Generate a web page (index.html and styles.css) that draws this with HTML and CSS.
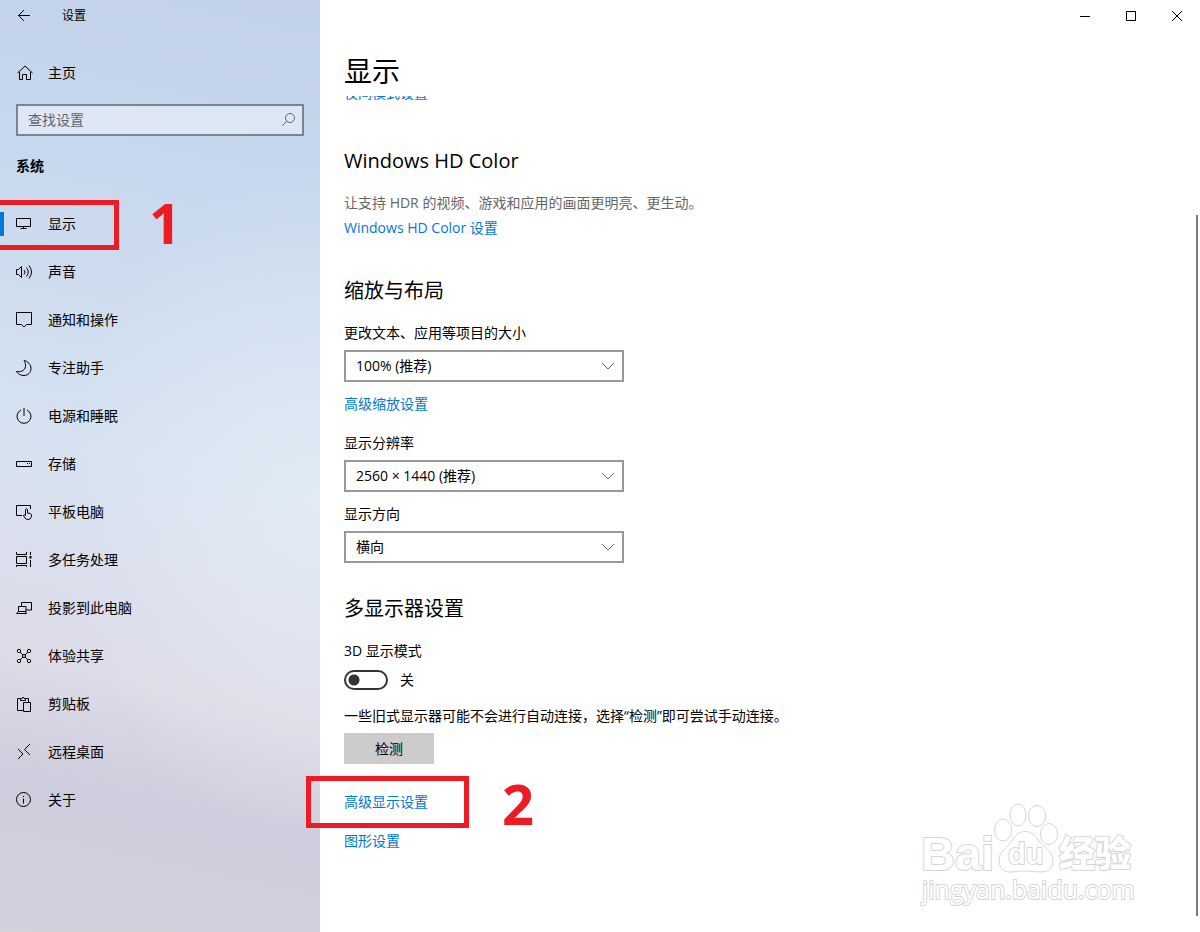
FILE: index.html
```
<!DOCTYPE html>
<html lang="zh-CN">
<head>
  <meta charset="UTF-8">
  <meta name="viewport" content="width=device-width, initial-scale=1.0">
  <title>设置</title>
  <link rel="stylesheet" href="styles.css">
</head>
<body>
  <aside class="sidebar">
    <header class="app-bar">
      <button class="back" type="button" aria-label="返回">
        <svg class="icon" viewBox="0 0 16 16"><path d="M14 7.500H2.500M8 2L2.500 7.500L8 13"/></svg>
      </button>
      <span>设置</span>
    </header>

    <a class="home" href="#home">
      <svg class="icon" viewBox="0 0 16 16"><path d="M1.500 8L9 1L16.500 8M3.500 7v7.500h3V9.500h4v5h4V7"/></svg>
      主页
    </a>

    <div class="search">
      <input type="search" aria-label="查找设置" placeholder="查找设置">
      <svg class="icon" viewBox="0 0 16 16"><circle cx="10" cy="6" r="4.500"/><path d="M6.800 9.200L2 14"/></svg>
    </div>

    <h2 class="group">系统</h2>

    <nav>
      <ul class="menu">
        <li class="marked">
          <a class="active" href="#display" aria-current="page">
            <svg class="icon" viewBox="0 0 16 16"><path d="M.5 2.500h14v8H.5zM7.500 10.500v2M4.500 12.500h6"/></svg>
            显示
          </a>
          <span class="mark mark-menu"></span>
          <span class="step step-one">1</span>
        </li>
        <li><a href="#sound">
          <svg class="icon" viewBox="0 0 16 16"><path d="M.5 5.500h2L5.500 2.500v11l-3-3h-2zM8 6q2 2 0 4.500M10.500 3.500q3.500 4.500 0 9M13 1.500q5 6.500 0 13"/></svg>
          声音</a></li>
        <li><a href="#notifications">
          <svg class="icon" viewBox="0 0 16 16"><path d="M.5.500h15v12h-5L8 15l-2.500-2.500h-5z"/></svg>
          通知和操作</a></li>
        <li><a href="#focus">
          <svg class="icon" viewBox="0 0 16 16"><path d="M8 .5C12 1.300 15 4.500 15 8.500C15 12.500 12 15.500 8 15.500C4.500 15.500 2 14 .5 11.500C6 12.500 10 9.500 9.500 5C9.400 3 8.800 1.800 8 .5z"/></svg>
          专注助手</a></li>
        <li><a href="#power">
          <svg class="icon" viewBox="0 0 16 16"><path d="M5 2a7 7 0 1 0 6 0M8 0v8"/></svg>
          电源和睡眠</a></li>
        <li><a href="#storage">
          <svg class="icon" viewBox="0 0 16 16"><path d="M.5 5.500h15v5H.5zM11 7.500h1M13 7.500h1"/></svg>
          存储</a></li>
        <li><a href="#tablet">
          <svg class="icon" viewBox="0 0 16 16"><path d="M6 11.500H.5v-10h14V5M9.500 11.500V5.500q1-1.500 2 0v3.500l3 .5q1.500 1 1 3q-.5 3-3.500 3q-2 0-3-1.500L7.300 11.500q.8-1.300 2.200 0"/></svg>
          平板电脑</a></li>
        <li><a href="#multitask">
          <svg class="icon" viewBox="0 0 16 16"><path d="M.5 0v2.500h10V0M.5 4.500h10v7H.5zM.5 15v-1.500h10V15M14.500 0v3M14.500 8v7"/><path d="M14.500 4v2.500" stroke-width="2"/></svg>
          多任务处理</a></li>
        <li><a href="#project">
          <svg class="icon" viewBox="0 0 16 16"><path d="M5.500 6V2.500h10v7.500H10M2.500 6.500h7.500v5H2.500zM2.500 11.500l-2 2h10l-1-2"/></svg>
          投影到此电脑</a></li>
        <li><a href="#shared">
          <svg class="icon" viewBox="0 0 16 16"><circle cx="3" cy="3" r="1.700"/><circle cx="13" cy="3" r="1.700"/><circle cx="3" cy="13" r="1.700"/><circle cx="13" cy="13" r="1.700"/><circle cx="8" cy="8" r="1.500"/><path d="M4.200 4.200L7 7M11.800 4.200L9 7M4.200 11.800L7 9M11.800 11.800L9 9"/></svg>
          体验共享</a></li>
        <li><a href="#clipboard">
          <svg class="icon" viewBox="0 0 16 16"><path d="M7 14.500H1.500v-12H4M10 2.500h2.500V6M4.500 4.500v-2h1.500q1-3 2 0H9.500v2zM7.500 6.500h7v9h-7z"/></svg>
          剪贴板</a></li>
        <li><a href="#remote">
          <svg class="icon" viewBox="0 0 16 16"><path d="M2 5l5 5L2 15M14 0L8.500 5.500L14 11"/></svg>
          远程桌面</a></li>
        <li><a href="#about">
          <svg class="icon" viewBox="0 0 16 16"><circle cx="7.500" cy="7.500" r="7"/><path d="M7.500 6.500v5M7.500 4v1"/></svg>
          关于</a></li>
      </ul>
    </nav>
  </aside>

  <main class="page">
    <div class="window-buttons">
      <button type="button" aria-label="最小化"><svg viewBox="0 0 10 10"><path d="M0 5.500h10"/></svg></button>
      <button type="button" aria-label="最大化"><svg viewBox="0 0 10 10"><path d="M.5.500h9v9h-9z"/></svg></button>
      <button type="button" aria-label="关闭"><svg viewBox="0 0 10 10"><path d="M0 0l10 10M10 0L0 10"/></svg></button>
    </div>

    <h1>显示</h1>

    <div class="content">
      <div class="scrolled">
        <a href="#night">夜间模式设置</a>
      </div>

      <section class="hd-color">
        <h2>Windows HD Color</h2>
        <p class="note">让支持 HDR 的视频、游戏和应用的画面更明亮、更生动。</p>
        <a href="#hd">Windows HD Color 设置</a>
      </section>

      <section class="scale">
        <h2>缩放与布局</h2>
        <label for="size">更改文本、应用等项目的大小</label>
        <div class="select">
          <select id="size"><option>100% (推荐)</option></select>
          <svg viewBox="0 0 12 8"><path d="M0 1l6 6l6-6"/></svg>
        </div>
        <a class="scale-link" href="#scaling">高级缩放设置</a>
        <label for="resolution">显示分辨率</label>
        <div class="select">
          <select id="resolution"><option>2560 × 1440 (推荐)</option></select>
          <svg viewBox="0 0 12 8"><path d="M0 1l6 6l6-6"/></svg>
        </div>
        <label for="orientation">显示方向</label>
        <div class="select">
          <select id="orientation"><option>横向</option></select>
          <svg viewBox="0 0 12 8"><path d="M0 1l6 6l6-6"/></svg>
        </div>
      </section>

      <section class="multi">
        <h2>多显示器设置</h2>
        <label for="mode">3D 显示模式</label>
        <div class="toggle">
          <input id="mode" type="checkbox" role="switch">
          <span>关</span>
        </div>
        <p>一些旧式显示器可能不会进行自动连接，选择“检测”即可尝试手动连接。</p>
        <button class="detect" type="button">检测</button>
        <div class="marked advanced">
          <a href="#advanced">高级显示设置</a>
          <span class="mark mark-link"></span>
          <span class="step step-two">2</span>
        </div>
        <a href="#graphics">图形设置</a>
      </section>
    </div>

    <div class="scrollbar"></div>

    <svg class="watermark" viewBox="0 0 220 112" role="img" aria-label="Baidu 经验">
      <text class="brand" x="1" y="70">Bai</text>
      <ellipse cx="83" cy="30" rx="8.500" ry="11"/>
      <ellipse cx="98" cy="15" rx="8" ry="11"/>
      <ellipse cx="117" cy="16" rx="8.700" ry="10.500"/>
      <ellipse cx="129" cy="34" rx="8.700" ry="10.500"/>
      <path d="M105 31.500C111 31.500 115 35 118 40C122 46 133 50 133 60C133 68 128 72 122 72C114 72 112 71 105 71C98 71 96 72 88 72C82 71 79 66 79 60C79 51 88 47 92 41C95 35 99 31.500 105 31.500z"/>
      <text class="du" x="88" y="64">du</text>
      <text class="cn" x="139" y="67">经验</text>
      <text class="url" x="2" y="99">jingyan.baidu.com</text>
    </svg>
  </main>
</body>
</html>
```
FILE: styles.css
```
:root {
  --link: #0078d7;
  --mark: #ed1c24;
  --border: #999;
}

* {
  margin: 0;
  padding: 0;
  box-sizing: border-box;
}

body {
  display: flex;
  min-height: 100vh;
  font-family: "Open Sans", "Noto Sans CJK SC", sans-serif;
  font-size: 14px;
  line-height: 20px;
  color: #000;
  background: #fff;
}

a {
  color: var(--link);
  text-decoration: none;
}

button,
input,
select {
  font: inherit;
  color: inherit;
}

svg {
  fill: none;
  stroke: currentColor;
}

ul {
  list-style: none;
}

.icon {
  width: 16px;
  height: 16px;
  flex: none;
  overflow: visible;
}

/* sidebar */
.sidebar {
  position: relative;
  flex: 0 0 320px;
  background:
    radial-gradient(ellipse 260px 340px at 100% 54%, rgba(233, 241, 248, 0.6), transparent),
    linear-gradient(192deg, #c2d1e9 0%, #c7d7ed 20%, #cfddef 36%, #d6e2f0 50%, #dadeec 61%, #dddbe7 72%, #cecddd 84%, #d4d0dc 100%);
}

.app-bar {
  display: flex;
  align-items: center;
  gap: 30px;
  height: 32px;
  padding-left: 16px;
  font-size: 12px;
}

.back {
  display: flex;
  border: 0;
  background: none;
}

.home {
  display: flex;
  align-items: center;
  gap: 16px;
  height: 48px;
  margin-top: 17px;
  padding-left: 16px;
  color: #000;
}

.search {
  display: flex;
  align-items: center;
  height: 32px;
  margin: 7px 16px 0;
  padding: 0 6px 0 10px;
  border: 2px solid #7a8490;
  background: rgba(255, 255, 255, 0.42);
  color: #60666e;
}

.search input {
  flex: 1;
  min-width: 0;
  border: 0;
  outline: 0;
  background: none;
}

.search input::placeholder {
  color: #60666e;
  opacity: 1;
}

.group {
  margin: 20px 16px 24px;
  font-size: 14px;
  font-weight: 700;
}

.menu a {
  display: flex;
  align-items: center;
  gap: 16px;
  height: 48px;
  padding-left: 16px;
  color: #000;
}

.menu .active {
  background: linear-gradient(var(--link), var(--link)) 0 12px / 4px 24px no-repeat;
}

/* red guide marks laid over the page */
.marked {
  position: relative;
}

.mark {
  position: absolute;
  border: 5px solid var(--mark);
  pointer-events: none;
}

.mark-menu {
  top: 0;
  left: 0;
  width: 119px;
  height: 50px;
  border-left: 0;
}

.mark-link {
  top: -16px;
  left: -38px;
  width: 163px;
  height: 52px;
}

.step {
  position: absolute;
  font-size: 56px;
  font-weight: 700;
  line-height: 56px;
  color: var(--mark);
}

.step-one {
  top: -6px;
  left: 149px;
}

.step-two {
  top: -17px;
  left: 158px;
}

/* page */
.page {
  position: relative;
  flex: 1;
  min-width: 0;
}

.window-buttons {
  display: flex;
  justify-content: flex-end;
  height: 32px;
}

.window-buttons button {
  display: grid;
  place-items: center;
  width: 46px;
  border: 0;
  background: none;
}

.window-buttons svg {
  width: 10px;
  height: 10px;
}

h1 {
  padding: 16px 24px 2px;
  font-size: 28px;
  font-weight: 400;
  line-height: 46px;
}

.content {
  padding: 0 24px;
}

.content a,
.content label {
  display: block;
  width: fit-content;
}

.content h2 {
  margin-bottom: 18px;
  font-size: 20px;
  font-weight: 400;
  line-height: 28px;
}

/* only the lower edge of this row is left below the title */
.scrolled {
  display: flex;
  align-items: flex-end;
  height: 7px;
  overflow: hidden;
}

.hd-color {
  margin-top: 44px;
}

.note {
  margin-bottom: 5px;
  color: #666;
}

.scale {
  margin-top: 39px;
}

.select {
  position: relative;
  width: 280px;
  margin: 7px 0 12px;
}

.select select {
  display: block;
  width: 100%;
  height: 32px;
  padding: 0 32px 0 10px;
  border: 2px solid var(--border);
  border-radius: 0;
  background: #fff;
  appearance: none;
}

.select svg {
  position: absolute;
  top: 12px;
  right: 10px;
  width: 12px;
  height: 8px;
  color: #666;
  pointer-events: none;
}

.scale-link {
  margin-bottom: 19px;
}

.multi {
  margin-top: 32px;
}

.toggle {
  display: flex;
  align-items: center;
  gap: 12px;
  margin: 9px 0 16px;
}

.toggle input {
  width: 44px;
  height: 20px;
  border: 2px solid #333;
  border-radius: 10px;
  background: radial-gradient(circle at 8px 8px, #333 5px, transparent 6px);
  appearance: none;
}

.detect {
  display: block;
  width: 90px;
  height: 31px;
  margin: 7px 0 28px;
  border: 0;
  background: #ccc;
}

.advanced {
  margin-bottom: 19px;
}

.scrollbar {
  position: absolute;
  top: 215px;
  right: 2px;
  bottom: 16px;
  width: 2px;
  background: #7a7a7a;
}

.watermark {
  position: absolute;
  right: 60px;
  bottom: 20px;
  width: 220px;
  height: 112px;
  fill: #fff;
  stroke: #d6d6d6;
}

.watermark text {
  stroke-width: 2px;
  paint-order: stroke;
}

.brand {
  font: 700 47px "Liberation Sans", sans-serif;
}

.du {
  font: 700 29px "Liberation Sans", sans-serif;
}

.cn {
  font: 900 36px "Noto Sans CJK SC", sans-serif;
}

.url {
  font: 400 25px "Open Sans", sans-serif;
}
```
